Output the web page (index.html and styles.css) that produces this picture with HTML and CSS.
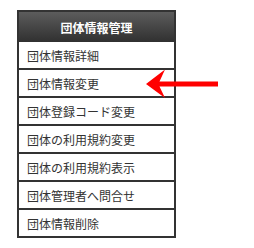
FILE: index.html
```html
<!DOCTYPE html>
<html>

<head>
    <title>団体情報管理</title>
    <meta charset="utf-8">
    <link rel="stylesheet" href="styles.css">
</head>

<body>
    <div class="page">
        <div class="menu">
            <div class="menu-title">団体情報管理</div>
            <div class="menu-item">団体情報詳細</div>
            <div class="menu-item">団体情報変更</div>
            <div class="menu-item">団体登録コード変更</div>
            <div class="menu-item">団体の利用規約変更</div>
            <div class="menu-item">団体の利用規約表示</div>
            <div class="menu-item">団体管理者へ問合せ</div>
            <div class="menu-item">団体情報削除</div>
        </div>

        <!-- pointer to the item -->
        <svg class="arrow" width="82" height="40" viewBox="140 64 82 40">
            <polygon points="146,84 165,69.5 159.5,81.5 218,81.5 218,86.5 159.5,86.5 165,98" fill="#ff0000" />
        </svg>
    </div>
</body>

</html>
```

FILE: styles.css
```css
body {
    margin: 0;
    font-family: "Noto Sans CJK JP", "Noto Sans", sans-serif;
    background-color: #fff;
}

.page {
    position: relative;
    width: 254px;
    height: 248px;
    padding: 10px 0 0 17px;
    box-sizing: border-box;
}

.menu {
    width: 159px;
    border: 2px solid #333;
    box-sizing: border-box;
    display: flex;
    flex-direction: column;
}

.menu-title {
    height: 30px;
    background: linear-gradient(#5c5c5c, #303030);
    color: white;
    font-weight: bold;
    font-size: 12px;
    display: flex;
    align-items: center;
    justify-content: center;
}

.menu-item {
    height: 26px;
    border-bottom: 2px solid #333;
    padding-left: 8px;
    font-size: 12px;
    color: #333;
    display: flex;
    align-items: center;
}

.menu-item:last-child {
    border-bottom: none;
}

.arrow {
    position: absolute;
    left: 140px;
    top: 64px;
}
```
